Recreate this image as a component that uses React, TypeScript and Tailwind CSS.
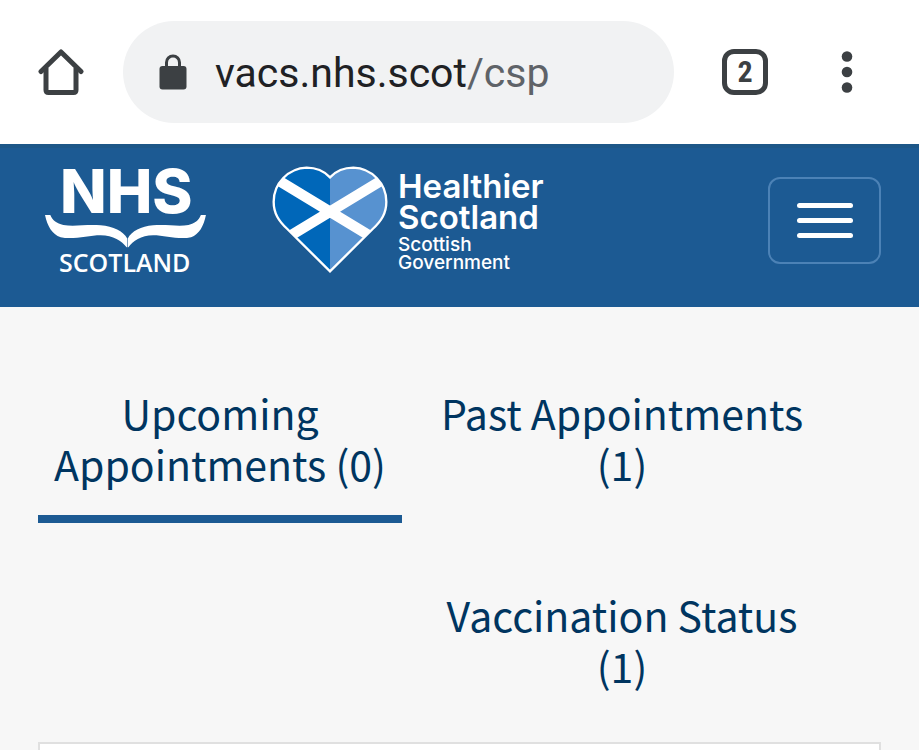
import React from 'react';

const tabs = [
  { label: 'Upcoming Appointments', count: 0, className: 'border-[#1c5a93]' },
  { label: 'Past Appointments', count: 1, className: 'border-transparent' },
  { label: 'Vaccination Status', count: 1, className: 'border-transparent col-start-2' },
];

const BrowserBar: React.FC = () => (
  <div className="flex items-center h-36 pl-[38px] pr-[61px] bg-white text-[#3c4043]">
    <button type="button" aria-label="Home" className="shrink-0">
      <svg viewBox="0 0 46 46" className="w-[46px] h-[46px]" fill="none" stroke="currentColor" strokeWidth="5" strokeLinejoin="round">
        <path d="M3 22.500 L23 3 L43 22.500" strokeLinecap="round" />
        <path d="M8 19 V41 Q8 43.500 10.500 43.500 H35.500 Q38 43.500 38 41 V19" />
      </svg>
    </button>

    <button
      type="button"
      aria-label="Address bar"
      className="flex flex-1 items-center h-[102px] ml-[39px] mr-12 pl-9 rounded-full bg-[#f1f2f3] text-left font-['Roboto',sans-serif] text-[41px]"
    >
      <svg viewBox="0 0 28 36" className="w-7 h-9 mr-7 shrink-0">
        <path d="M7.500 14 V8.500 a6.500 6.500 0 0 1 13 0 V14" fill="none" stroke="currentColor" strokeWidth="3" />
        <rect x="0.500" y="12" width="27" height="23.500" rx="3" fill="currentColor" />
      </svg>
      <span className="pt-1">
        <span className="text-[#202124]">vacs.nhs.scot</span>
        <span className="text-[#5f6368]">/csp</span>
      </span>
    </button>

    <button
      type="button"
      aria-label="Open tabs"
      className="flex items-center justify-center shrink-0 w-[46px] h-[46px] rounded-xl border-[5px] border-current font-['Roboto_Condensed','Roboto',sans-serif] text-[30px] leading-none font-bold"
    >
      2
    </button>

    <button type="button" aria-label="Menu" className="shrink-0 ml-[68px]">
      <svg viewBox="0 0 22 42" className="w-[22px] h-[42px]" fill="currentColor">
        <circle cx="11" cy="5.500" r="5.300" />
        <circle cx="11" cy="21" r="5.300" />
        <circle cx="11" cy="36.500" r="5.300" />
      </svg>
    </button>
  </div>
);

// One page of the open book; the other is its mirror
const PAGE = 'M45 195 H61 C68 212 80 220 100 225 C135 231 170 222 212 226 C250 229 280 243 292 266 V292 H290 C276 274 250 256 212 256 C175 256 130 270 92 262 C66 253 52 228 45 195 Z';

const NhsLogo: React.FC = () => (
  <svg viewBox="0 0 163 110" className="w-[163px] h-[110px] shrink-0 overflow-visible" fill="#fff">
    <text x="15" y="48" className="font-['Inter',sans-serif] text-[61px] font-extrabold">NHS</text>
    <g transform="scale(0.333) translate(-45 -45)">
      <path d={PAGE} />
      <path d={PAGE} transform="translate(571 0) scale(-0.95 1)" />
    </g>
    <text x="14" y="107" className="font-['Open_Sans',sans-serif] text-[25px] font-semibold">SCOTLAND</text>
  </svg>
);

const HEART =
  'M210 82 C190 61 168 53 140 53 C85 55 41 100 41 155 C41 190 56 213 82 237 L210 364 L338 237 C364 213 379 190 379 155 C379 100 335 55 280 53 C252 53 230 61 210 82 Z';

const HealthierScotlandLogo: React.FC = () => (
  <div className="flex items-start text-white font-['Inter',sans-serif] ml-16">
    <svg viewBox="36 45 348 330" className="w-[116px] h-[110px] shrink-0">
      <clipPath id="heart">
        <path d={HEART} />
      </clipPath>
      <g clipPath="url(#heart)">
        <rect x="36" y="45" width="174" height="330" fill="#0067b9" />
        <rect x="210" y="45" width="174" height="330" fill="#5792d0" />
        <path d="M30 76 L360 276 M390 76 L60 276" stroke="#fff" strokeWidth="31" />
      </g>
      <path d={HEART} fill="none" stroke="#fff" strokeWidth="7" />
    </svg>
    <p className="ml-2.5 mt-1.5 text-[33px] leading-[31px] font-semibold">
      Healthier
      <br />
      Scotland
      <span className="block mt-[3px] text-[19px] leading-[18px] font-medium">
        Scottish
        <br />
        Government
      </span>
    </p>
  </div>
);

const Header: React.FC = () => (
  <header className="flex items-start h-[163px] pt-[17px] pl-[45px] pr-[38px] bg-[#1c5a93] border-t-4 border-[#1d5788]">
    <NhsLogo />
    <HealthierScotlandLogo />
    <button
      type="button"
      aria-label="Toggle navigation"
      className="flex flex-col items-center justify-center gap-2.5 w-[113px] h-[87px] ml-auto mt-3 rounded-xl border-2 border-[#4c82b6]"
    >
      <span className="w-14 h-[5px] rounded-full bg-white"></span>
      <span className="w-14 h-[5px] rounded-full bg-white"></span>
      <span className="w-14 h-[5px] rounded-full bg-white"></span>
    </button>
  </header>
);

export default function App() {
  return (
    <div className="flex flex-col min-h-screen bg-[#f7f7f7]">
      <BrowserBar />
      <Header />

      <main className="flex flex-col flex-1 pt-20">
        {/* Appointment tabs */}
        <div role="tablist" className="grid grid-cols-2 gap-x-[38px] gap-y-[66px] pl-[38px] pr-[115px]">
          {tabs.map((tab, idx) => (
            <button
              key={tab.label}
              type="button"
              role="tab"
              aria-selected={idx === 0}
              className={`pb-[26px] border-b-8 text-center text-[#003560] font-['Noto_Sans_CJK_SC',sans-serif] text-[41px] leading-[51px] ${tab.className}`}
            >
              {tab.label} ({tab.count})
            </button>
          ))}
        </div>

        {/* Results panel */}
        <section className="flex-1 mx-[38px] mt-[17px] bg-white border-2 border-b-0 border-[#e0e0e0]"></section>
      </main>
    </div>
  );
}
